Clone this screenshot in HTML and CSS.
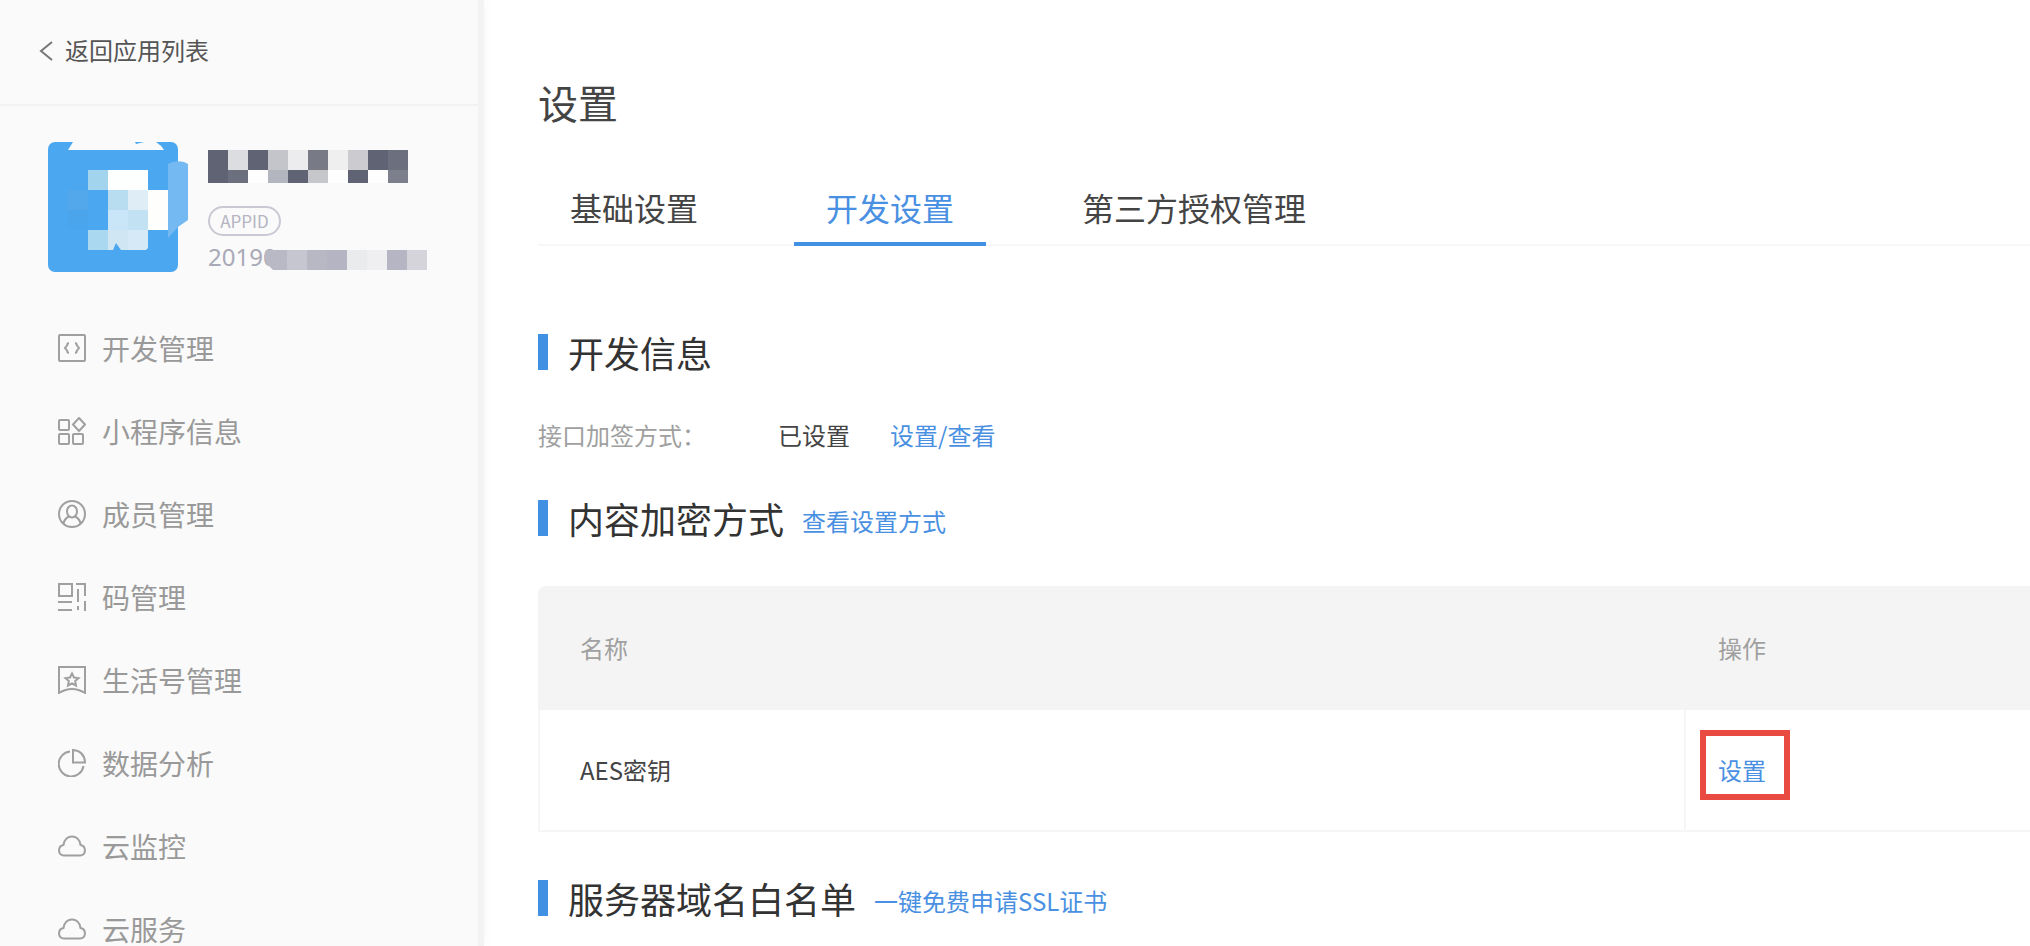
FILE: index.html
```html
<!DOCTYPE html>
<html lang="zh">
<head>
    <meta charset="UTF-8">
    <meta name="viewport" content="width=device-width, initial-scale=1.0">
    <title>设置</title>
    <link rel="stylesheet" href="styles.css">
</head>
<body>
    <div class="layout">
        <aside class="sidebar">
            <a class="back" href="#">
                <svg class="back-icon" width="14" height="20" viewBox="0 0 14 20"><path d="M13 1L2 10l11 9"/></svg>
                返回应用列表
            </a>
            <div class="profile">
                <svg class="avatar" width="142" height="130" viewBox="0 0 142 130">
                    <rect width="130" height="130" rx="7" fill="#4ba7f0"/>
                    <path d="M20 8L25 0H87L88 2L96 0H108Q113 3 116 8Z" fill="#fafafa"/>
                    <path d="M120 22Q126 18 136 20L140 22V78L130 85L120 96Z" fill="#74b9f2"/>
                    <rect x="20" y="48" width="20" height="20" fill="#52a8ea"/>
                    <rect x="20" y="68" width="20" height="20" fill="#4ba5ec"/>
                    <rect x="40" y="28" width="20" height="20" fill="#a2d4ee"/>
                    <rect x="60" y="28" width="40" height="20" fill="#fdfefe"/>
                    <rect x="60" y="48" width="20" height="20" fill="#b8ddf1"/>
                    <rect x="80" y="48" width="20" height="20" fill="#dfeef6"/>
                    <rect x="100" y="48" width="20" height="40" fill="#fefffc"/>
                    <rect x="60" y="68" width="20" height="20" fill="#c8e6f7"/>
                    <rect x="80" y="68" width="20" height="20" fill="#c2e2f3"/>
                    <rect x="40" y="88" width="20" height="20" fill="#abd8f1"/>
                    <rect x="60" y="88" width="20" height="20" fill="#d0e6f3"/>
                    <path d="M80 88h20v18l-2 2H80z" fill="#d6e9f6"/>
                    <path d="M65 108l3-7 5 7z" fill="#4ba7f0"/>
                </svg>
                <div class="profile-info">
                    <svg class="name-mask" width="200" height="33" viewBox="0 0 200 33">
                        <rect width="20" height="33" fill="#606374"/>
                        <rect x="20" width="20" height="20" fill="#dcdde1"/>
                        <rect x="40" width="20" height="20" fill="#606374"/>
                        <rect x="60" width="20" height="20" fill="#c4c5ca"/>
                        <rect x="80" width="20" height="20" fill="#ececee"/>
                        <rect x="100" width="20" height="20" fill="#787a86"/>
                        <rect x="120" width="20" height="20" fill="#efefef"/>
                        <rect x="140" width="20" height="20" fill="#cccbd0"/>
                        <rect x="160" width="20" height="20" fill="#606374"/>
                        <rect x="180" width="20" height="20" fill="#6c6f7e"/>
                        <rect x="20" y="20" width="20" height="13" fill="#6c6f7e"/>
                        <rect x="40" y="20" width="20" height="13" fill="#fefefe"/>
                        <rect x="60" y="20" width="20" height="13" fill="#b4b6bf"/>
                        <rect x="80" y="20" width="20" height="13" fill="#606374"/>
                        <rect x="100" y="20" width="20" height="13" fill="#c6c7cb"/>
                        <rect x="120" y="20" width="20" height="13" fill="#fefefe"/>
                        <rect x="140" y="20" width="20" height="13" fill="#606374"/>
                        <rect x="160" y="20" width="20" height="13" fill="#fefefe"/>
                        <rect x="180" y="20" width="20" height="13" fill="#7d808c"/>
                    </svg>
                    <span class="appid-tag">APPID</span>
                    <div class="appid">
                        <span>20190</span>
                        <svg class="appid-mask" width="164" height="20" viewBox="0 0 164 20">
                            <path d="M3 0H24V20H10L4 14Q0 8 3 0Z" fill="#b9b9c6"/>
                            <rect x="24" width="20" height="20" fill="#c6c6d0"/>
                            <rect x="44" width="20" height="20" fill="#b8b7c4"/>
                            <rect x="64" width="20" height="20" fill="#b5b4c2"/>
                            <rect x="84" width="20" height="20" fill="#eaebed"/>
                            <rect x="104" width="20" height="20" fill="#efeff1"/>
                            <rect x="124" width="20" height="20" fill="#b6b5c3"/>
                            <rect x="144" width="20" height="20" fill="#d4d4da"/>
                        </svg>
                    </div>
                </div>
            </div>
            <nav class="menu">
                <a class="menu-item" href="#">
                    <svg class="menu-icon" viewBox="0 0 28 28"><rect x="1" y="1" width="26" height="26" rx="1"/><path d="M11 9q-1.500 0-2 2.500L7 14l2 2.500q.5 2.500 2 2.500M17 9q1.500 0 2 2.500L21 14l-2 2.500q-.5 2.500-2 2.500"/></svg>
                    开发管理
                </a>
                <a class="menu-item" href="#">
                    <svg class="menu-icon" viewBox="0 0 28 28"><rect x="1" y="3" width="10" height="10" rx="1"/><rect x="1" y="17" width="10" height="10" rx="1"/><rect x="15" y="17" width="10" height="10" rx="1"/><path d="M21 1l6 6.500-6 6.500-6-6.500z"/></svg>
                    小程序信息
                </a>
                <a class="menu-item" href="#">
                    <svg class="menu-icon" viewBox="0 0 28 28"><circle cx="14" cy="14" r="13"/><ellipse cx="14" cy="11.500" rx="5" ry="6"/><path d="M5.500 23.500q1-5 5.500-7M22.500 23.500q-1-5-5.500-7"/></svg>
                    成员管理
                </a>
                <a class="menu-item" href="#">
                    <svg class="menu-icon" viewBox="0 0 28 28"><path d="M1 1h13v12H1zM0 19h14M0 27h14M18 1h9v12M20 6v13M20 23v4M27 18v10"/></svg>
                    码管理
                </a>
                <a class="menu-item" href="#">
                    <svg class="menu-icon" viewBox="0 0 28 28"><path d="M1 1h26v26q-13-8-26 0z"/><path d="M14 7.500l2 4 4.500.600-3.300 3 .8 4.400-4-2.200-4 2.200.8-4.400-3.300-3 4.500-.600z"/></svg>
                    生活号管理
                </a>
                <a class="menu-item" href="#">
                    <svg class="menu-icon" viewBox="0 0 28 28"><path d="M12 2.500A12.500 12.500 0 1 0 25.500 17"/><path d="M15 1v12.500h12Q26.500 2 15 1z"/></svg>
                    数据分析
                </a>
                <a class="menu-item" href="#">
                    <svg class="menu-icon" viewBox="0 0 28 28"><path d="M6 23.500C-.5 23.500-.5 14 5.500 13 7 1.500 21 1.500 22.500 13c6 1 6 10.500-.5 10.500z"/></svg>
                    云监控
                </a>
                <a class="menu-item" href="#">
                    <svg class="menu-icon" viewBox="0 0 28 28"><path d="M6 23.500C-.5 23.500-.5 14 5.500 13 7 1.500 21 1.500 22.500 13c6 1 6 10.500-.5 10.500z"/></svg>
                    云服务
                </a>
            </nav>
        </aside>

        <main class="content">
            <h1>设置</h1>
            <nav class="tabs">
                <a class="tab" href="#">基础设置</a>
                <a class="tab active" href="#">开发设置</a>
                <a class="tab" href="#">第三方授权管理</a>
            </nav>

            <section>
                <h2>开发信息</h2>
                <div class="info-row">
                    <span class="info-label">接口加签方式：</span>
                    <span class="info-value">已设置</span>
                    <a href="#">设置/查看</a>
                </div>
            </section>

            <section>
                <h2>内容加密方式 <a href="#">查看设置方式</a></h2>
                <table>
                    <thead>
                        <tr>
                            <th>名称</th>
                            <th class="col-action">操作</th>
                        </tr>
                    </thead>
                    <tbody>
                        <tr>
                            <td>AES密钥</td>
                            <td><a class="highlight" href="#">设置</a></td>
                        </tr>
                    </tbody>
                </table>
            </section>

            <section>
                <h2>服务器域名白名单 <a href="#">一键免费申请SSL证书</a></h2>
            </section>
        </main>
    </div>
</body>
</html>
```

FILE: styles.css
```css
* {
    box-sizing: border-box;
}
body {
    margin: 0;
    font-family: "Noto Sans CJK SC", "Noto Sans", sans-serif;
    font-size: 24px;
    color: #444;
    background: #fff;
}
a {
    color: #4a90e2;
    text-decoration: none;
}
svg {
    display: block;
    flex: none;
}
.layout {
    display: flex;
    height: 100vh;
    overflow: hidden;
}

/* 左侧栏 */
.sidebar {
    flex: none;
    width: 484px;
    background: #fafafa;
    border-right: 6px solid #f3f3f3;
    box-shadow: 0 0 12px rgba(0, 0, 0, 0.04);
}
.back {
    display: flex;
    align-items: center;
    gap: 12px;
    height: 106px;
    padding: 0 0 6px 39px;
    border-bottom: 2px solid #f2f2f2;
    color: #555;
}
.back-icon {
    margin-top: 4px;
    fill: none;
    stroke: #777;
    stroke-width: 2;
}
.profile {
    display: flex;
    gap: 18px;
    padding: 36px 0 0 48px;
}
.profile-info {
    padding-top: 8px;
}
.appid-tag {
    display: block;
    width: 73px;
    margin-top: 23px;
    border: 2px solid #c9c9d4;
    border-radius: 15px;
    font-size: 17px;
    line-height: 26px;
    text-align: center;
    color: #b4b4c2;
}
.appid {
    display: flex;
    align-items: flex-end;
    margin-top: 8px;
    font-family: "Noto Sans", sans-serif;
    line-height: 26px;
    color: #a9a9b8;
}
.appid-mask {
    margin-left: -14px;
}
.menu {
    margin-top: 34px;
}
.menu-item {
    display: flex;
    align-items: center;
    gap: 16px;
    height: 83px;
    padding-left: 58px;
    font-size: 28px;
    color: #999;
}
.menu-icon {
    width: 28px;
    height: 28px;
    fill: none;
    stroke: #a0a0a0;
    stroke-width: 2;
}

/* 右侧内容 */
.content {
    flex: 1;
    min-width: 0;
    padding: 74px 0 0 54px;
}
h1 {
    margin: 0 0 46px;
    font-size: 40px;
    font-weight: normal;
    line-height: 56px;
}
.tabs {
    display: flex;
    gap: 64px;
    margin-bottom: 88px;
    border-bottom: 2px solid #f7f7f7;
}
.tab {
    margin-bottom: -2px;
    padding: 0 32px 4px;
    border-bottom: 4px solid transparent;
    font-size: 32px;
    line-height: 62px;
    color: #444;
}
.tab.active {
    color: #4a90e2;
    border-bottom-color: #4090e3;
}
section {
    margin-bottom: 48px;
}
h2 {
    display: flex;
    align-items: center;
    gap: 18px;
    height: 36px;
    margin: 0;
    padding-left: 20px;
    border-left: 10px solid #4090e3;
    font-size: 36px;
    font-weight: normal;
    line-height: 36px;
    color: #333;
}
h2 a {
    padding-top: 6px;
    font-size: 24px;
}
.info-row {
    display: flex;
    margin-top: 48px;
    line-height: 34px;
}
.info-label {
    width: 240px;
    color: #a0a0a0;
}
.info-value {
    margin-right: 40px;
}
table {
    width: 100%;
    margin-top: 50px;
    border-collapse: separate;
    border-spacing: 0;
    text-align: left;
}
th {
    height: 124px;
    padding: 0 34px 2px;
    background: #f4f4f4;
    font-weight: normal;
    color: #a0a0a0;
}
th:first-child {
    border-top-left-radius: 8px;
    padding-left: 42px;
}
.col-action {
    width: 346px;
}
td {
    height: 122px;
    padding: 0 32px 2px;
    border-left: 2px solid #f6f6f6;
    border-bottom: 2px solid #f6f6f6;
}
td:first-child {
    padding-left: 40px;
}
.highlight {
    position: relative;
}
/* 红框标注 */
.highlight::after {
    content: "";
    position: absolute;
    inset: -22px -24px -13px -18px;
    border: 6px solid #e94b43;
}
```
